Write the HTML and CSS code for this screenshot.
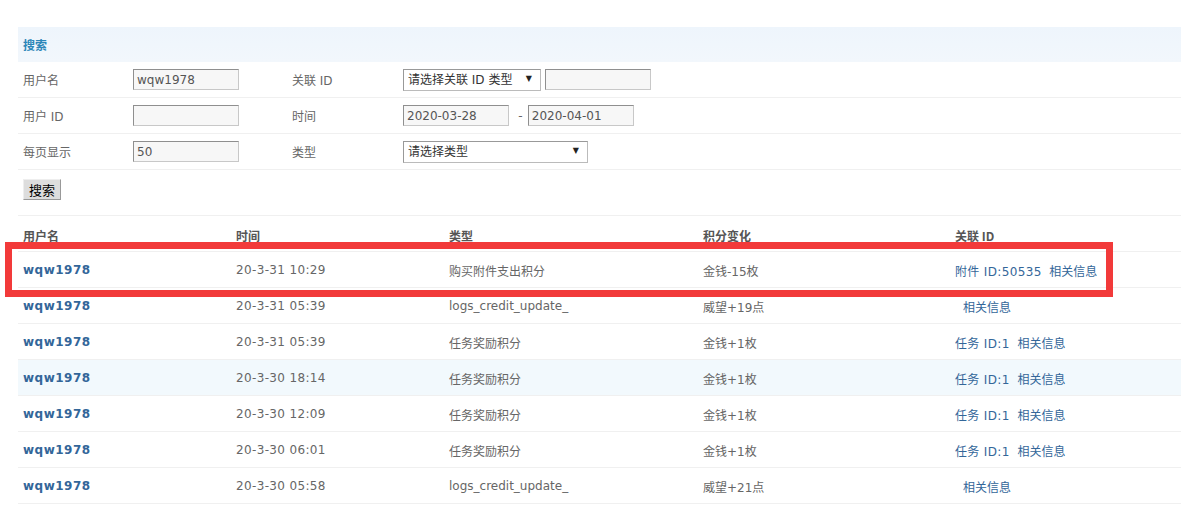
FILE: index.html
```html
<!DOCTYPE html>
<html lang="zh-CN">

<head>
    <meta charset="UTF-8">
    <title>积分记录</title>
    <link rel="stylesheet" href="styles.css">
</head>

<body>
    <div class="wrap">
        <table class="search-form">
            <tr>
                <th colspan="4" class="partition">搜索</th>
            </tr>
            <tr>
                <td class="label">用户名</td>
                <td class="field"><input type="text" class="txt" value="wqw1978"></td>
                <td class="label label-2">关联 ID</td>
                <td>
                    <span class="sel sel-rel"><select><option>请选择关联 ID 类型</option></select></span>
                    <input type="text" class="txt">
                </td>
            </tr>
            <tr>
                <td class="label">用户 ID</td>
                <td class="field"><input type="text" class="txt"></td>
                <td class="label label-2">时间</td>
                <td>
                    <input type="text" class="txt" value="2020-03-28">
                    <span class="dash">-</span><input type="text" class="txt" value="2020-04-01">
                </td>
            </tr>
            <tr>
                <td class="label">每页显示</td>
                <td class="field"><input type="text" class="txt" value="50"></td>
                <td class="label label-2">类型</td>
                <td><span class="sel sel-type"><select><option>请选择类型</option></select></span></td>
            </tr>
            <tr>
                <td colspan="4" class="btn-row"><button class="btn">搜索</button></td>
            </tr>
        </table>

        <table class="log-list">
            <thead>
                <tr>
                    <th class="c-user">用户名</th>
                    <th class="c-time">时间</th>
                    <th class="c-type">类型</th>
                    <th class="c-credit">积分变化</th>
                    <th>关联 ID</th>
                </tr>
            </thead>
            <tbody>
                <tr>
                    <td><a href="#" class="user">wqw1978</a></td>
                    <td class="time">20-3-31 10:29</td>
                    <td>购买附件支出积分</td>
                    <td>金钱-15枚</td>
                    <td><a href="#" class="rid">附件 ID:50535</a> &nbsp;<a href="#">相关信息</a></td>
                </tr>
                <tr>
                    <td><a href="#" class="user">wqw1978</a></td>
                    <td class="time">20-3-31 05:39</td>
                    <td>logs_credit_update_</td>
                    <td>威望+19点</td>
                    <td class="rel-only"><a href="#">相关信息</a></td>
                </tr>
                <tr>
                    <td><a href="#" class="user">wqw1978</a></td>
                    <td class="time">20-3-31 05:39</td>
                    <td>任务奖励积分</td>
                    <td>金钱+1枚</td>
                    <td><a href="#" class="rid">任务 ID:1</a> &nbsp;<a href="#">相关信息</a></td>
                </tr>
                <tr class="hover">
                    <td><a href="#" class="user">wqw1978</a></td>
                    <td class="time">20-3-30 18:14</td>
                    <td>任务奖励积分</td>
                    <td>金钱+1枚</td>
                    <td><a href="#" class="rid">任务 ID:1</a> &nbsp;<a href="#">相关信息</a></td>
                </tr>
                <tr>
                    <td><a href="#" class="user">wqw1978</a></td>
                    <td class="time">20-3-30 12:09</td>
                    <td>任务奖励积分</td>
                    <td>金钱+1枚</td>
                    <td><a href="#" class="rid">任务 ID:1</a> &nbsp;<a href="#">相关信息</a></td>
                </tr>
                <tr>
                    <td><a href="#" class="user">wqw1978</a></td>
                    <td class="time">20-3-30 06:01</td>
                    <td>任务奖励积分</td>
                    <td>金钱+1枚</td>
                    <td><a href="#" class="rid">任务 ID:1</a> &nbsp;<a href="#">相关信息</a></td>
                </tr>
                <tr>
                    <td><a href="#" class="user">wqw1978</a></td>
                    <td class="time">20-3-30 05:58</td>
                    <td>logs_credit_update_</td>
                    <td>威望+21点</td>
                    <td class="rel-only"><a href="#">相关信息</a></td>
                </tr>
            </tbody>
        </table>
    </div>

    <!-- annotation box drawn over the first row -->
    <div class="mark"></div>
</body>

</html>
```

FILE: styles.css
```css
body {
    margin: 0;
    background: #fff;
    font-family: "DejaVu Sans", "Noto Sans CJK SC", sans-serif;
    font-size: 12px;
    color: #666;
}
.wrap {
    padding: 27px 0 0 18px;
}
a {
    color: #336699;
    text-decoration: none;
}
table {
    width: 100%;
    border-collapse: collapse;
}

/* search form */
.search-form td,
.search-form th {
    height: 35px;
    padding: 0 0 0 5px;
    border-bottom: 1px solid #f0f0f0;
    text-align: left;
    vertical-align: middle;
}
.search-form th.partition {
    height: 35px;
    background: linear-gradient(#eef5fc, #f2f7fc);
    color: #2b86b8;
    font-weight: bold;
    border-bottom: none;
}
.search-form td.label {
    width: 110px;
}
.search-form td.field {
    width: 154px;
    padding-left: 0;
}
.search-form td.label-2 {
    width: 106px;
}
.txt {
    box-sizing: border-box;
    width: 106px;
    height: 21px;
    padding: 0 3px;
    margin: 0;
    border: 1px solid #c8c8c8;
    border-top-color: #8f8f8f;
    border-left-color: #8f8f8f;
    background: #f7f7f7;
    font-family: inherit;
    font-size: 12px;
    color: #555;
    vertical-align: middle;
}
.sel {
    position: relative;
    display: inline-block;
    vertical-align: middle;
}
.sel select {
    appearance: none;
    box-sizing: border-box;
    height: 22px;
    margin: 0;
    padding: 0 4px;
    border: 1px solid #999;
    border-right-color: #bbb;
    border-bottom-color: #bbb;
    background: #fff;
    font-family: inherit;
    font-size: 12px;
    color: #333;
}
.sel::after {
    content: "\25BC";
    position: absolute;
    right: 9px;
    top: 5px;
    font-size: 8px;
    color: #222;
    pointer-events: none;
}
.sel-rel select {
    width: 138px;
}
.sel-type select {
    width: 185px;
}
.dash {
    display: inline-block;
    width: 15px;
    text-align: center;
    vertical-align: middle;
}
.search-form td.btn-row {
    height: 36px;
    padding-top: 9px;
    vertical-align: top;
}
.btn {
    height: 21px;
    padding: 0 5px;
    border: 1px solid #999;
    border-top-color: #eee;
    border-left-color: #eee;
    background: #ddd;
    font-family: "Noto Sans CJK SC", sans-serif;
    font-size: 13px;
    line-height: 19px;
    color: #000;
}

/* list */
.log-list th,
.log-list td {
    height: 35px;
    padding: 0 0 0 5px;
    text-align: left;
    vertical-align: middle;
    border-bottom: 1px solid #f0f0f0;
    white-space: nowrap;
}
.log-list th {
    color: #555;
    font-family: "Noto Sans CJK SC", sans-serif;
    font-weight: bold;
    padding-top: 3px;
    height: 32px;
}
.log-list td {
    padding-top: 1px;
    height: 34px;
}
.log-list .c-user { width: 208px; }
.log-list .c-time { width: 208px; }
.log-list .c-type { width: 249px; }
.log-list .c-credit { width: 247px; }
.log-list a.user {
    font-weight: bold;
    letter-spacing: 0.5px;
}
.log-list td.time,
.log-list a.rid {
    letter-spacing: 0.35px;
}
.log-list td.rel-only {
    padding-left: 13px;
}
.log-list tr.hover td {
    background: #f2f9fd;
}

.mark {
    position: absolute;
    left: 5px;
    top: 242px;
    width: 1094px;
    height: 41px;
    border: 7px solid #f23a3a;
}
```
